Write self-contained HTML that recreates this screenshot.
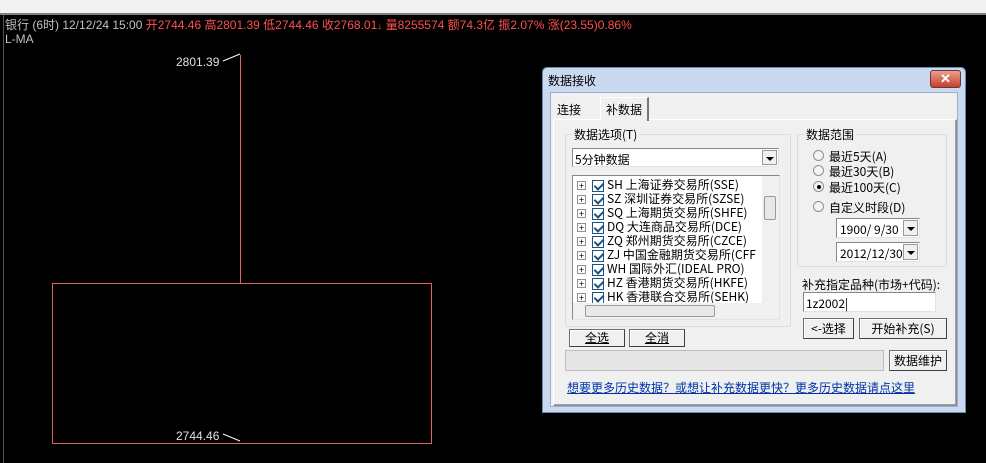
<!DOCTYPE html>
<html><head><meta charset="utf-8"><style>
*{margin:0;padding:0;box-sizing:border-box}
body{width:986px;height:463px;background:#000;position:relative;overflow:hidden;font-family:"Liberation Sans","Noto Sans CJK SC",sans-serif;font-size:12px}
.a{position:absolute;white-space:nowrap}
.sim{font-family:"WenQuanYi Zen Hei","Noto Sans CJK SC",sans-serif;font-size:12px;color:#000}
.btn{position:absolute;background:#f0f0f0;border:1px solid #707070;border-right-color:#404040;border-bottom-color:#404040;box-shadow:inset 1px 1px #fff;text-align:center;font-family:"WenQuanYi Zen Hei","Noto Sans CJK SC",sans-serif;font-size:12px}
.grp{position:absolute;border:1px solid #d5dfe5;border-radius:2px}
.lg{position:absolute;background:#f0f0f0;padding:0 2px;top:-9px;left:6px;font-family:"WenQuanYi Zen Hei","Noto Sans CJK SC",sans-serif;font-size:12px}
.sunk{position:absolute;background:#fff;border:1px solid #828790;border-right-color:#e3e3e3;border-bottom-color:#e3e3e3}
.rad{position:absolute;width:11px;height:11px;border:1px solid #8e8f8f;border-radius:50%;background:#f4f4f4}
.arr{position:absolute;width:15px;background:#f0f0f0;border:1px solid #999;top:1px;bottom:1px;right:1px}
.arr:after{content:"";position:absolute;left:3px;top:6px;border:4px solid transparent;border-top:4px solid #000;border-bottom:0}
.row{position:absolute;left:4px;height:14px;font-family:"WenQuanYi Zen Hei","Noto Sans CJK SC",sans-serif;font-size:12px;white-space:nowrap;line-height:14px}
.pl{display:inline-block;width:9px;height:9px;border:1px solid #919191;font-size:9px;line-height:7px;text-align:center;vertical-align:middle;margin-right:6px;background:#fff}
.cb{display:inline-block;width:12px;height:12px;border:1px solid #1c5180;vertical-align:middle;margin-right:3px;position:relative;background:#fff}
.cb:after{content:"";position:absolute;left:3px;top:0px;width:4px;height:7px;border:solid #1c5180;border-width:0 2px 2px 0;transform:rotate(45deg)}
</style></head><body>
<div class="a" style="left:0;top:0;width:986px;height:13px;background:#f2f2f2"></div>
<div class="a" style="left:0;top:13px;width:986px;height:2px;background:#808080"></div>
<div class="a" style="left:3px;top:15px;width:1px;height:448px;background:#555"></div>
<div class="a" style="left:5px;top:16px;color:#c0c0c0;font-size:12px">银行 (6时) 12/12/24 15:00 <span style="color:#ff5050">开2744.46 高2801.39 低2744.46 收2768.01<span style="font-size:10px">↓</span> 量8255574 额74.3亿 振2.07% 涨(23.55)0.86%</span></div>
<div class="a" style="left:5px;top:32px;color:#c0c0c0;font-size:12px">L-MA</div>
<div class="a" style="left:240px;top:55px;width:1px;height:229px;background:#e06060"></div>
<div class="a" style="left:52px;top:283px;width:380px;height:161px;border:1px solid #e06060"></div>
<div class="a" style="left:176px;top:55px;color:#e0e0e0;font-size:12px">2801.39</div>
<div class="a" style="left:176px;top:429px;color:#e0e0e0;font-size:12px">2744.46</div>
<svg class="a" style="left:222px;top:52px" width="20" height="12"><line x1="1" y1="9" x2="18" y2="2" stroke="#fff"/></svg>
<svg class="a" style="left:222px;top:432px" width="20" height="12"><line x1="1" y1="2" x2="18" y2="9" stroke="#fff"/></svg>

<div class="a" style="left:542px;top:67px;width:424px;height:346px;background:#c9daf0;border:1px solid #6d8bb0;border-radius:5px 5px 0 0"></div>
<div class="a sim" style="left:548px;top:72px">数据接收</div>
<div class="a" style="left:930px;top:70px;width:31px;height:18px;background:linear-gradient(#e8a090,#c7402c);border:1px solid #6d3a30;border-radius:3px;color:#fff;font-weight:bold;text-align:center;line-height:16px;font-size:13px">✕</div>
<div class="a" style="left:550px;top:92px;width:408px;height:315px;background:#f0f0f0;border:1px solid #a0b0c8"></div>
<div class="a sim" style="left:557px;top:101px">连接</div>
<div class="a" style="left:553px;top:119px;width:404px;height:287px;border:1px solid #898c95;border-top-color:#fff;border-left-color:#fff;background:#f0f0f0;box-shadow:inset -1px -1px #a0a0a0"></div>
<div class="a sim" style="left:600px;top:97px;width:49px;height:24px;background:#f0f0f0;border:1px solid #fff;border-right:2px solid #777;border-bottom:none;padding:3px 0 0 5px">补数据</div>

<div class="grp" style="left:565px;top:134px;width:226px;height:193px"><div class="lg">数据选项(T)</div></div>
<div class="sunk" style="left:572px;top:148px;width:207px;height:19px"><div class="a sim" style="left:2px;top:2px">5分钟数据</div><div class="arr"></div></div>
<div class="sunk" style="left:572px;top:175px;width:208px;height:145px;overflow:hidden">
<div class="row" style="top:2px"><span class="pl">+</span><span class="cb"></span>SH 上海证券交易所(SSE)</div>
<div class="row" style="top:16px"><span class="pl">+</span><span class="cb"></span>SZ 深圳证券交易所(SZSE)</div>
<div class="row" style="top:30px"><span class="pl">+</span><span class="cb"></span>SQ 上海期货交易所(SHFE)</div>
<div class="row" style="top:44px"><span class="pl">+</span><span class="cb"></span>DQ 大连商品交易所(DCE)</div>
<div class="row" style="top:58px"><span class="pl">+</span><span class="cb"></span>ZQ 郑州期货交易所(CZCE)</div>
<div class="row" style="top:72px"><span class="pl">+</span><span class="cb"></span>ZJ 中国金融期货交易所(CFF</div>
<div class="row" style="top:86px"><span class="pl">+</span><span class="cb"></span>WH 国际外汇(IDEAL PRO)</div>
<div class="row" style="top:100px"><span class="pl">+</span><span class="cb"></span>HZ 香港期货交易所(HKFE)</div>
<div class="row" style="top:114px"><span class="pl">+</span><span class="cb"></span>HK 香港联合交易所(SEHK)</div>
<div class="a" style="left:189px;top:0;width:17px;height:127px;background:#f0f0f0"><div class="a" style="left:2px;top:20px;width:12px;height:24px;background:#e8e8e8;border:1px solid #999;border-radius:2px"></div></div>
<div class="a" style="left:0;top:127px;width:206px;height:17px;background:#f0f0f0"><div class="a" style="left:12px;top:2px;width:130px;height:12px;background:#e8e8e8;border:1px solid #999;border-radius:2px"></div></div>
</div>
<div class="btn" style="left:569px;top:329px;width:56px;height:18px;line-height:16px"><u>全选</u></div>
<div class="btn" style="left:629px;top:329px;width:56px;height:18px;line-height:16px"><u>全消</u></div>

<div class="grp" style="left:797px;top:134px;width:150px;height:133px"><div class="lg">数据范围</div></div>
<div class="rad" style="left:813px;top:150px"></div><div class="a sim" style="left:829px;top:148px">最近5天(A)</div>
<div class="rad" style="left:813px;top:165px"></div><div class="a sim" style="left:829px;top:163px">最近30天(B)</div>
<div class="rad" style="left:813px;top:181px"><div class="a" style="left:3px;top:3px;width:4px;height:4px;border-radius:50%;background:#000"></div></div><div class="a sim" style="left:829px;top:179px">最近100天(C)</div>
<div class="rad" style="left:813px;top:201px"></div><div class="a sim" style="left:829px;top:199px">自定义时段(D)</div>
<div class="sunk" style="left:836px;top:218px;width:84px;height:20px"><div class="a sim" style="left:3px;top:2px">1900/ 9/30</div><div class="arr"></div></div>
<div class="sunk" style="left:836px;top:242px;width:84px;height:20px"><div class="a sim" style="left:3px;top:2px">2012/12/30</div><div class="arr"></div></div>
<div class="a sim" style="left:802px;top:276px">补充指定品种(市场+代码):</div>
<div class="sunk" style="left:803px;top:292px;width:133px;height:20px"><div class="a sim" style="left:2px;top:2px">1z2002|</div></div>
<div class="btn" style="left:803px;top:318px;width:51px;height:21px;line-height:19px">&lt;-选择</div>
<div class="btn" style="left:859px;top:318px;width:88px;height:21px;line-height:19px">开始补充(S)</div>
<div class="a" style="left:565px;top:350px;width:319px;height:21px;border:1px solid #bcbcbc;background:#e6e6e6"></div>
<div class="btn" style="left:889px;top:350px;width:58px;height:21px;line-height:19px">数据维护</div>
<div class="a sim" style="left:567px;top:379px;color:#0033aa;text-decoration:underline">想要更多历史数据？或想让补充数据更快？更多历史数据请点这里</div>
</body></html>
